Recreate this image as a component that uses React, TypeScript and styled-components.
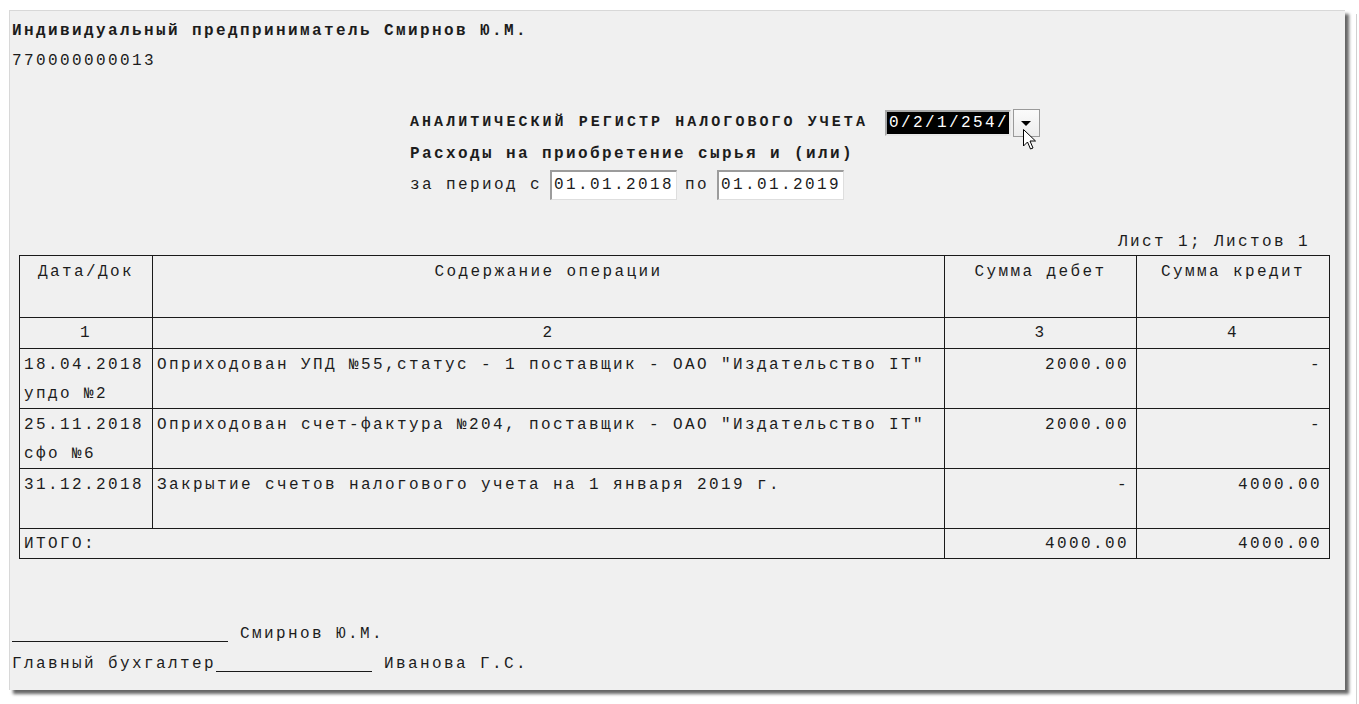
import React from "react";
import styled, { createGlobalStyle } from "styled-components";

const Global = createGlobalStyle`
  html, body { margin: 0; padding: 0; background: #ffffff; }
  body { width: 1359px; height: 704px; overflow: hidden; }
`;

const Page = styled.div`
  position: relative;
  width: 1359px;
  height: 704px;
  padding: 10px 0 0 9px;
  box-sizing: border-box;
`;

const Panel = styled.div`
  width: 1336px;
  height: 680px;
  box-sizing: border-box;
  background: #f0f0f0;
  border-top: 1px solid #d8d8d8;
  border-left: 1px solid #d8d8d8;
  box-shadow: 4px 4px 3px rgba(0, 0, 0, 0.6);
  padding: 5px 0 0 2px;
  font-family: "Liberation Mono", "Courier New", monospace;
  font-size: 16px;
  letter-spacing: 2.4px;
  color: #1c1c1c;
  display: flex;
  flex-direction: column;
`;

const Line = styled.div<{ $bold?: boolean }>`
  height: 30px;
  line-height: 30px;
  white-space: pre;
  font-weight: ${(p) => (p.$bold ? 700 : 400)};
`;

const TitleBlock = styled.div`
  margin: 31px 0 0 398px;
  display: flex;
  flex-direction: column;
`;

const TitleRow = styled.div`
  height: 31px;
  display: flex;
  align-items: center;
  white-space: pre;
`;

const TitleText = styled.span`
  font-weight: 700;
  font-size: 15px;
  letter-spacing: 3.05px;
  margin-right: 17px;
`;

const SelectBox = styled.div`
  width: 126px;
  height: 26px;
  box-sizing: border-box;
  border: 2px solid #a8a8a8;
  border-right-color: #e8e8e8;
  border-bottom-color: #e8e8e8;
  background: #000;
  color: #fff;
  display: flex;
  align-items: center;
  padding-left: 2px;
  font-size: 16px;
  letter-spacing: 2.4px;
  line-height: 1;
`;

const DropButton = styled.div`
  width: 27px;
  height: 28px;
  margin-left: 2px;
  box-sizing: border-box;
  border: 1px solid #9a9a9a;
  background: linear-gradient(#fbfbfb, #ececec);
  display: flex;
  align-items: center;
  justify-content: center;
`;

const Arrow = styled.div`
  width: 0;
  height: 0;
  border-left: 5px solid transparent;
  border-right: 5px solid transparent;
  border-top: 5px solid #000;
  margin-top: 2px;
`;

const DateInput = styled.span`
  display: inline-flex;
  align-items: center;
  height: 30px;
  box-sizing: border-box;
  padding: 0 0 0 2px;
  width: 127px;
  background: #fff;
  border-top: 2px solid #9c9c9c;
  border-left: 2px solid #9c9c9c;
  border-right: 1px solid #dedede;
  border-bottom: 1px solid #dedede;
  margin: 0 8px;
`;

const SheetInfo = styled.div`
  margin-top: 27px;
  height: 28px;
  line-height: 30px;
  text-align: right;
  padding-right: 35px;
  white-space: pre;
`;

const Table = styled.table`
  margin-left: 7px;
  width: 1310px;
  border-collapse: collapse;
  table-layout: fixed;
`;

const Col = styled.col<{ $w: number }>`
  width: ${(p) => p.$w}px;
`;

const Th = styled.td`
  border: 1px solid #1a1a1a;
  text-align: center;
  vertical-align: top;
  height: 60px;
  padding: 1px 0 0;
  line-height: 30px;
  white-space: pre;
`;

const NumCell = styled.td`
  border: 1px solid #1a1a1a;
  text-align: center;
  height: 29px;
  padding: 0;
  line-height: 30px;
`;

const Td = styled.td<{ $align?: "left" | "right"; $h?: number; $lh?: number }>`
  border: 1px solid #1a1a1a;
  text-align: ${(p) => p.$align ?? "left"};
  vertical-align: top;
  height: ${(p) => p.$h ?? 57}px;
  padding: 2px ${(p) => (p.$align === "right" ? 7 : 0)}px 0 4px;
  line-height: ${(p) => p.$lh ?? 28.5}px;
  white-space: pre;
  overflow: hidden;
`;

const SignArea = styled.div`
  margin-top: 60px;
  display: flex;
  flex-direction: column;
`;

const Blank = styled.span<{ $w: number }>`
  display: inline-block;
  width: ${(p) => p.$w}px;
  height: 1px;
  background: #1a1a1a;
  vertical-align: -4px;
`;

const Cursor = styled.svg`
  position: absolute;
  left: 1023px;
  top: 129px;
`;

const EdgeLine = styled.div`
  position: absolute;
  right: 2px;
  top: 14px;
  width: 1px;
  height: 690px;
  background: #d0d0d0;
`;

type Row = { date: string; doc: string; text: string; debit: string; credit: string };

const rows: Row[] = [
  {
    date: "18.04.2018",
    doc: "упдо №2",
    text: 'Оприходован УПД №55,статус - 1 поставщик - ОАО "Издательство IT"',
    debit: "2000.00",
    credit: "-",
  },
  {
    date: "25.11.2018",
    doc: "сфо №6",
    text: 'Оприходован счет-фактура №204, поставщик - ОАО "Издательство IT"',
    debit: "2000.00",
    credit: "-",
  },
  {
    date: "31.12.2018",
    doc: "",
    text: "Закрытие счетов налогового учета на 1 января 2019 г.",
    debit: "-",
    credit: "4000.00",
  },
];

export default function App() {
  return (
    <Page>
      <Global />
      <Panel>
        <Line $bold>Индивидуальный предприниматель Смирнов Ю.М.</Line>
        <Line>770000000013</Line>
        <TitleBlock>
          <TitleRow>
            <TitleText>АНАЛИТИЧЕСКИЙ РЕГИСТР НАЛОГОВОГО УЧЕТА</TitleText>
            <SelectBox>0/2/1/254/</SelectBox>
            <DropButton>
              <Arrow />
            </DropButton>
          </TitleRow>
          <TitleRow>
            <b>Расходы на приобретение сырья и (или)</b>
          </TitleRow>
          <TitleRow>
            за период с<DateInput>01.01.2018</DateInput>по<DateInput>01.01.2019</DateInput>
          </TitleRow>
        </TitleBlock>
        <SheetInfo>Лист 1; Листов 1</SheetInfo>
        <Table>
          <colgroup>
            <Col $w={133} />
            <Col $w={792} />
            <Col $w={192} />
            <Col $w={193} />
          </colgroup>
          <tbody>
            <tr>
              <Th>Дата/Док</Th>
              <Th>Содержание операции</Th>
              <Th>Сумма дебет</Th>
              <Th>Сумма кредит</Th>
            </tr>
            <tr>
              <NumCell>1</NumCell>
              <NumCell>2</NumCell>
              <NumCell>3</NumCell>
              <NumCell>4</NumCell>
            </tr>
            {rows.map((r) => (
              <tr key={r.date}>
                <Td>
                  {r.date}
                  {"\n"}
                  {r.doc}
                </Td>
                <Td>{r.text}</Td>
                <Td $align="right">{r.debit}</Td>
                <Td $align="right">{r.credit}</Td>
              </tr>
            ))}
            <tr>
              <Td colSpan={2} $h={27} $lh={27}>
                ИТОГО:
              </Td>
              <Td $align="right" $h={27} $lh={27}>
                4000.00
              </Td>
              <Td $align="right" $h={27} $lh={27}>
                4000.00
              </Td>
            </tr>
          </tbody>
        </Table>
        <SignArea>
          <Line>
            <Blank $w={216} /> Смирнов Ю.М.
          </Line>
          <Line>
            Главный бухгалтер<Blank $w={156} /> Иванова Г.С.
          </Line>
        </SignArea>
      </Panel>
      <EdgeLine />
      <Cursor width="14" height="22" viewBox="0 0 14 22">
        <path
          d="M0.5 0.5 L0.5 17 L4.5 13 L7.5 20 L10 19 L7 12 L12.5 12 Z"
          fill="#fff"
          stroke="#000"
          strokeWidth="1"
          strokeLinejoin="miter"
        />
      </Cursor>
    </Page>
  );
}
